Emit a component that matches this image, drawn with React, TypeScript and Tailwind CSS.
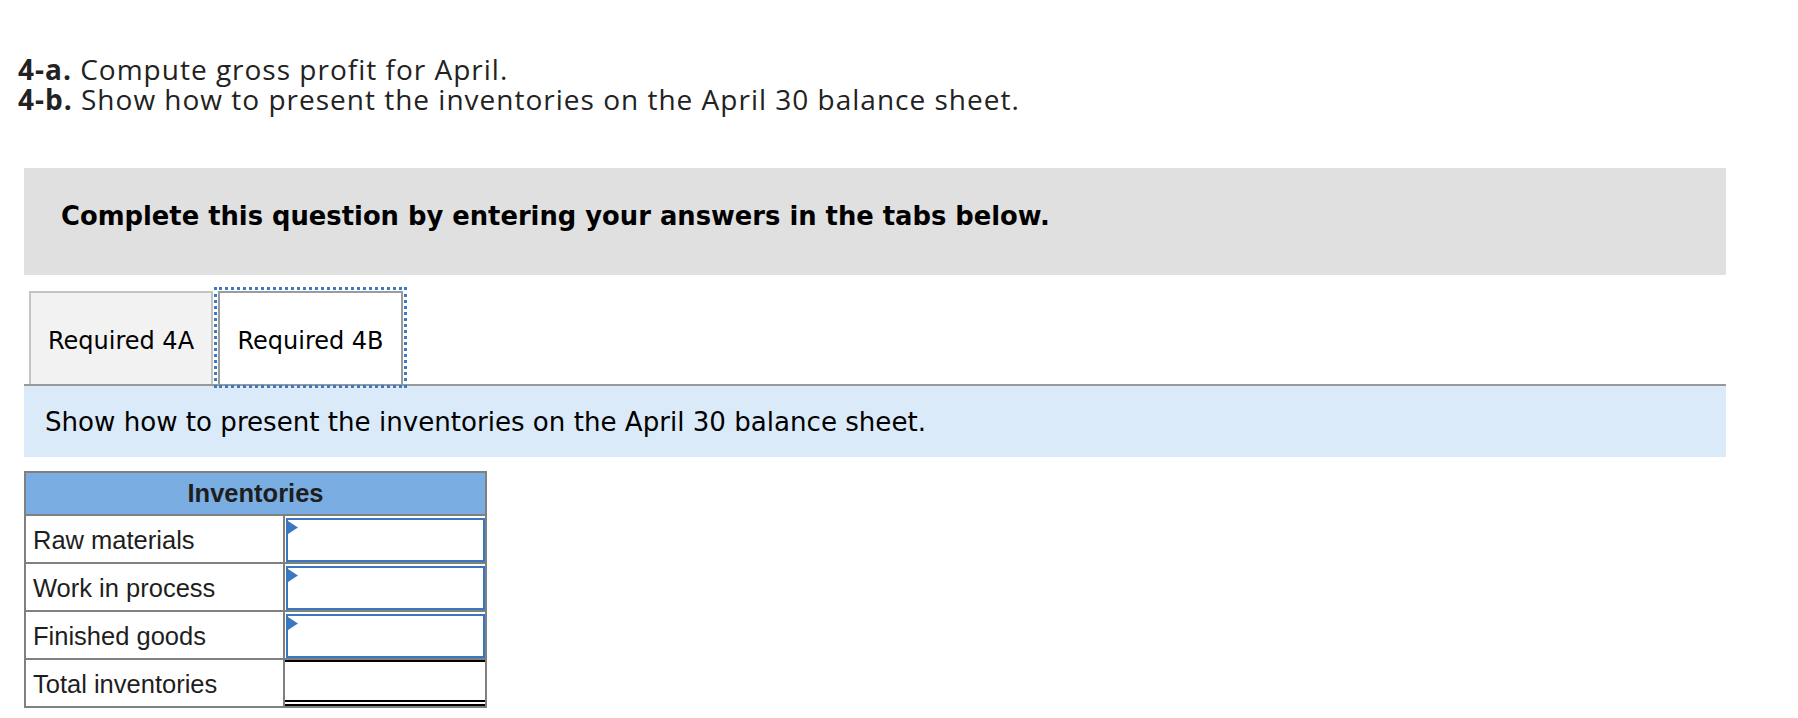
import React from "react";

const Marker = () => (
  <svg
    className="absolute left-0 top-[1px]"
    width="10"
    height="13"
    viewBox="0 0 10 13"
  >
    <polygon points="0,0 10,6.5 0,13" fill="#3a78c2" />
  </svg>
);

const InputCell = () => (
  <div className="flex-1 h-full pt-[2px] pl-[1px]">
    <div className="relative h-full border-2 border-[#3b77bd] bg-white">
      <Marker />
    </div>
  </div>
);

export default function App() {
  const label =
    "w-[259px] h-full border-r-2 border-[#808080] flex items-center pl-[7px] pt-[2px]";
  return (
    <div className="w-[1798px] min-h-[718px] bg-white text-black">
      <div className="pt-[55px] pl-[18px] font-['Open_Sans',sans-serif] text-[28px] leading-[29.5px] tracking-[1px] text-[#222]">
        <div>
          <span className="font-bold">4-a.</span> Compute gross profit for April.
        </div>
        <div>
          <span className="font-bold">4-b.</span> Show how to present the inventories on the April 30 balance sheet.
        </div>
      </div>

      <div className="ml-[24px] w-[1702px]">
        <div className="mt-[54px] h-[107px] bg-[#e0e0e0] pt-[33px] pl-[37px] font-['DejaVu_Sans',sans-serif] font-bold text-[25.8px] leading-[30px]">
          Complete this question by entering your answers in the tabs below.
        </div>

        <div className="mt-[16px] flex items-end h-[93px] border-b-2 border-[#999999] box-content pl-[5px] font-['DejaVu_Sans',sans-serif] text-[24px]">
          <div className="w-[184px] h-[93px] bg-[#f2f2f2] border-2 border-b-0 border-[#c4c4c4] flex items-center justify-center pt-[5px]">
            Required 4A
          </div>
          <div className="relative z-10 ml-[5px] w-[185px] h-[93px] bg-white border-2 border-b-0 border-[#9b9b9b] outline-3 outline-dotted outline-offset-1 outline-[#3d7ac4] flex items-center justify-center pt-[5px]">
            Required 4B
          </div>
        </div>

        <div className="h-[71px] bg-[#dbeaf8] pt-[21px] pl-[21px] font-['DejaVu_Sans',sans-serif] text-[26.1px] leading-[30px]">
          Show how to present the inventories on the April 30 balance sheet.
        </div>

        <div className="mt-[14px] w-[463px] border-2 border-[#808080] font-['Liberation_Sans',Arial,sans-serif] text-[25.5px] leading-[29px] text-[#1e1e1e]">
          <div className="h-[43px] bg-[#7aade2] border-b-2 border-[#808080] flex items-center justify-center font-bold">
            Inventories
          </div>
          {["Raw materials", "Work in process", "Finished goods"].map((t) => (
            <div key={t} className="h-[48px] border-b-2 border-[#808080] flex">
              <div className={label}>{t}</div>
              <InputCell />
            </div>
          ))}
          <div className="h-[46px] flex">
            <div className={label}>Total inventories</div>
            <div className="flex-1 h-full border-t-2 border-b-[6px] border-double border-black" style={{ borderTopStyle: "solid" }} />
          </div>
        </div>
      </div>
    </div>
  );
}
